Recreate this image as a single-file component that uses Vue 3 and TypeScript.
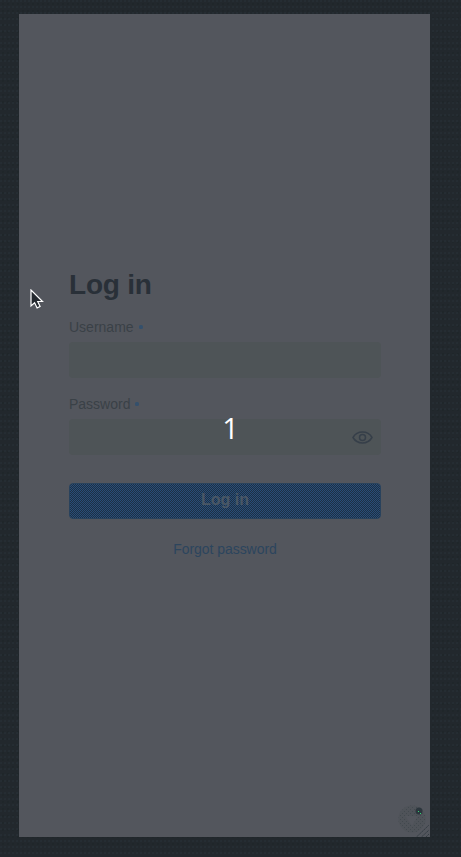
<script setup lang="ts">
import { ref } from 'vue'

interface Field {
  id: string
  label: string
  type: string
}

const fields: Field[] = [
  { id: 'username', label: 'Username', type: 'text' },
  { id: 'password', label: 'Password', type: 'password' },
]
const values = ref<Record<string, string>>({ username: '', password: '' })
const countdown = ref(1)
</script>

<template>
  <main class="desktop">
    <section class="window">
      <form class="login" @submit.prevent>
        <h1>Log in</h1>
        <div v-for="field in fields" :key="field.id" class="field">
          <label :for="field.id">{{ field.label }}<span class="required"></span></label>
          <div class="control">
            <input :id="field.id" v-model="values[field.id]" :type="field.type" />
            <svg v-if="field.type === 'password'" class="eye" viewBox="0 0 22 16">
              <path d="M2 8.500C4.100 4.900 7.500 3.100 11.500 3.100S18.900 4.900 21 8.500C18.900 12.100 15.500 13.900 11.500 13.900S4.100 12.100 2 8.500Z" />
              <circle cx="11.500" cy="8.500" r="3" />
            </svg>
          </div>
        </div>
        <button type="submit">Log in</button>
        <a class="forgot">Forgot password</a>
      </form>
      <div class="badge">
        <svg viewBox="0 0 32 32">
          <defs>
            <pattern id="dots" width="4" height="4" patternUnits="userSpaceOnUse">
              <path d="M0 0h1v1H0zM2 2h1v1H2z" fill="#42494e" />
            </pattern>
          </defs>
          <circle cx="14" cy="14" r="13.500" fill="#4f5359" />
          <circle cx="14" cy="14" r="13.500" fill="url(#dots)" />
          <path d="M7 11h13l-6 10z" fill="#53565d" />
          <circle cx="21" cy="6" r="3.500" fill="#2c363d" />
          <path d="M20 6h1v1h-1zM22 8h1v1h-1z" fill="#2fd875" />
          <path d="M18.500 32L31 20M23.500 32L31 25M28 32l3-3" stroke="#343c43" stroke-width="1" stroke-dasharray="2 .5" />
        </svg>
      </div>
    </section>
    <div class="countdown">{{ countdown }}</div>
    <svg class="pointer" viewBox="0 0 14 20">
      <path d="M1 1v16l3.600-3.300 2.500 5.200 3-1.400-2.400-5H12.500Z" />
    </svg>
  </main>
</template>

<style>
body {
  margin: 0;
  background: #22282e;
}
</style>

<style scoped>
.desktop {
  position: relative;
  box-sizing: border-box;
  width: 461px;
  height: 857px;
  padding: 14px 31px 20px 19px;
  overflow: hidden;
  font-family: "Liberation Sans", Arial, sans-serif;
  background-color: #22282d;
  background-image:
    radial-gradient(circle at 1px 1px, #252d33 0.7px, transparent 1px),
    radial-gradient(circle at 3px 4px, #1f262a 0.7px, transparent 1px);
  background-size: 4px 6px, 5px 7px;
}
.window {
  position: relative;
  box-sizing: border-box;
  width: 411px;
  height: 823px;
  padding: 254px 49px 0 50px;
  background: #53565d;
}
.login {
  display: flex;
  flex-direction: column;
}
h1 {
  margin: 0 0 18px;
  height: 33px;
  font-size: 28px;
  line-height: 33px;
  font-weight: 700;
  letter-spacing: -0.2px;
  color: #293038;
}
.field {
  height: 59px;
  margin-bottom: 18px;
}
label {
  display: flex;
  align-items: center;
  height: 16px;
  margin-bottom: 7px;
  font-size: 14px;
  line-height: 16px;
  color: #3a4147;
}
.required {
  width: 4px;
  height: 4px;
  margin: 0 0 0 5px;
  border-radius: 40%;
  background: #34506c;
}
.control {
  display: flex;
  align-items: center;
  box-sizing: border-box;
  height: 36px;
  padding: 0 8px;
  border-radius: 4px;
  background: #4e5457;
}
input {
  flex: 1;
  min-width: 0;
  padding: 0;
  border: 0;
  outline: 0;
  background: transparent;
  color: #293039;
}
.eye {
  width: 22px;
  height: 16px;
  fill: none;
  stroke: #363f49;
  stroke-width: 1.5;
}
button {
  height: 36px;
  margin: 10px 0 0;
  padding: 0 0 3px;
  border: 1px solid #29425c;
  border-radius: 4px;
  font: 700 16px/18px "Liberation Sans", Arial, sans-serif;
  color: #4a5765;
  background-color: #294d78;
  background-image: conic-gradient(#1d3044 25%, transparent 0 50%, #1d3044 0 75%, transparent 0);
  background-size: 2px 2px;
}
.forgot {
  align-self: center;
  margin-top: 22px;
  font-size: 14px;
  line-height: 16px;
  letter-spacing: -0.05px;
  color: #2c455d;
}
.badge {
  position: absolute;
  right: 0;
  bottom: 0;
  width: 32px;
  height: 32px;
}
.badge svg {
  display: block;
}
.countdown {
  position: absolute;
  top: 411px;
  left: 0;
  width: 461px;
  text-align: center;
  font-family: "Open Sans", "Noto Sans", sans-serif;
  font-size: 29px;
  line-height: 34px;
  color: #fff;
}
.pointer {
  position: absolute;
  top: 289px;
  left: 30px;
  width: 14px;
  height: 20px;
  fill: #23282e;
  stroke: #fff;
  stroke-width: 1.2;
}
</style>
